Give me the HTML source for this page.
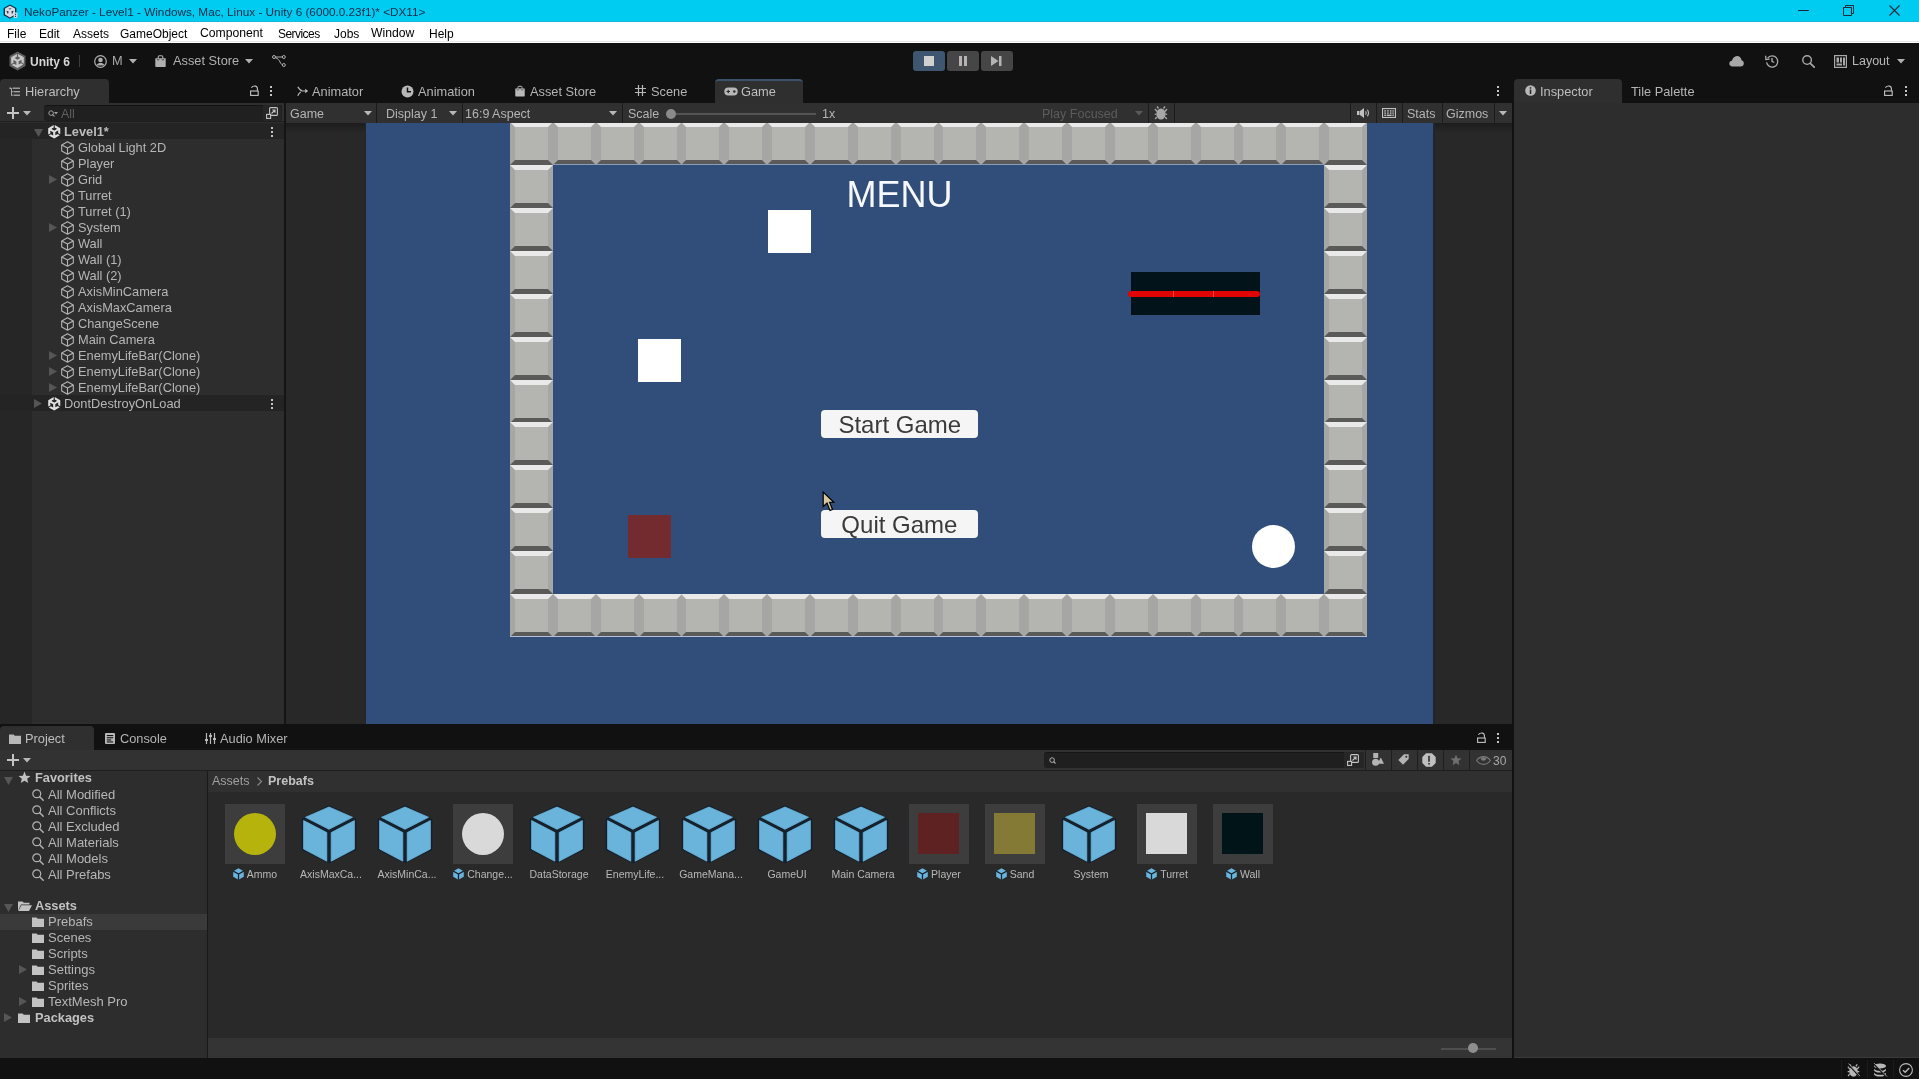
<!DOCTYPE html>
<html><head><meta charset="utf-8"><style>
html,body{margin:0;padding:0;width:1919px;height:1079px;overflow:hidden;background:#111111;}
body{position:relative;font-family:"Liberation Sans", sans-serif;}
div{position:absolute;box-sizing:border-box;}
.t{white-space:nowrap;}
.tile{width:43px;height:43px;border-style:solid;border-width:5px;border-color:#e8e9e8 #a6a6a4 #5a5a58 #a6a6a4;background:#b4b4b1;}
</style></head><body>
<div id="root" style="left:0;top:0;width:1919px;height:1079px;will-change:transform;">
<div style="left:0px;top:0px;width:1919px;height:22px;background:#00ccf2;"></div>
<div class="t" style="left:24px;top:5.85px;font-size:11.75px;line-height:11.75px;color:#0a2a48;font-weight:400;font-family:'Liberation Sans', sans-serif;">NekoPanzer - Level1 - Windows, Mac, Linux - Unity 6 (6000.0.23f1)* &lt;DX11&gt;</div>
<div style="left:0px;top:22px;width:1919px;height:21px;background:#ffffff;"></div>
<div style="left:0px;top:21px;width:1919px;height:1px;background:#18b6d8;"></div>
<div style="left:0px;top:41px;width:1919px;height:1px;background:#e6e6e6;"></div>
<div class="t" style="left:7px;top:27.64px;font-size:12px;line-height:12px;color:#000000;font-weight:400;font-family:'Liberation Sans', sans-serif;letter-spacing:0px;">File</div>
<div class="t" style="left:39px;top:27.64px;font-size:12px;line-height:12px;color:#000000;font-weight:400;font-family:'Liberation Sans', sans-serif;letter-spacing:0px;">Edit</div>
<div class="t" style="left:73px;top:27.64px;font-size:12px;line-height:12px;color:#000000;font-weight:400;font-family:'Liberation Sans', sans-serif;letter-spacing:0px;">Assets</div>
<div class="t" style="left:120px;top:27.64px;font-size:12px;line-height:12px;color:#000000;font-weight:400;font-family:'Liberation Sans', sans-serif;letter-spacing:0px;">GameObject</div>
<div class="t" style="left:200px;top:27.47px;font-size:12.2px;line-height:12.2px;color:#000000;font-weight:400;font-family:'Liberation Sans', sans-serif;letter-spacing:0px;">Component</div>
<div class="t" style="left:278px;top:27.64px;font-size:12px;line-height:12px;color:#000000;font-weight:400;font-family:'Liberation Sans', sans-serif;letter-spacing:-0.55px;">Services</div>
<div class="t" style="left:334px;top:27.64px;font-size:12px;line-height:12px;color:#000000;font-weight:400;font-family:'Liberation Sans', sans-serif;letter-spacing:0px;">Jobs</div>
<div class="t" style="left:371px;top:27.47px;font-size:12.2px;line-height:12.2px;color:#000000;font-weight:400;font-family:'Liberation Sans', sans-serif;letter-spacing:0px;">Window</div>
<div class="t" style="left:429px;top:27.64px;font-size:12px;line-height:12px;color:#000000;font-weight:400;font-family:'Liberation Sans', sans-serif;letter-spacing:0px;">Help</div>
<div style="left:0px;top:43px;width:1919px;height:60px;background:#111111;"></div>
<div class="t" style="left:30px;top:55.64px;font-size:12px;line-height:12px;color:#d6d6d6;font-weight:700;font-family:'Liberation Sans', sans-serif;">Unity 6</div>
<div class="t" style="left:112px;top:54.96px;font-size:12.8px;line-height:12.8px;color:#a8a8a8;font-weight:400;font-family:'Liberation Sans', sans-serif;">M</div>
<div class="t" style="left:173px;top:54.96px;font-size:12.8px;line-height:12.8px;color:#b0b0b0;font-weight:400;font-family:'Liberation Sans', sans-serif;">Asset Store</div>
<div class="t" style="left:1852px;top:55.22px;font-size:12.5px;line-height:12.5px;color:#b8b8b8;font-weight:400;font-family:'Liberation Sans', sans-serif;">Layout</div>
<div style="left:913px;top:51px;width:32px;height:20px;background:#3e5670;border-radius:3px;"></div>
<div style="left:947px;top:51px;width:32px;height:20px;background:#464646;border-radius:3px;"></div>
<div style="left:981px;top:51px;width:32px;height:20px;background:#464646;border-radius:3px;"></div>
<div style="left:0px;top:79px;width:109px;height:24px;background:#2f2f2f;border-radius:4px 4px 0 0;"></div>
<div class="t" style="left:25px;top:85.96px;font-size:12.8px;line-height:12.8px;color:#bebebe;font-weight:400;font-family:'Liberation Sans', sans-serif;">Hierarchy</div>
<div class="t" style="left:312px;top:85.96px;font-size:12.8px;line-height:12.8px;color:#b4b4b4;font-weight:400;font-family:'Liberation Sans', sans-serif;">Animator</div>
<div class="t" style="left:418px;top:85.96px;font-size:12.8px;line-height:12.8px;color:#b4b4b4;font-weight:400;font-family:'Liberation Sans', sans-serif;">Animation</div>
<div class="t" style="left:530px;top:85.96px;font-size:12.8px;line-height:12.8px;color:#b4b4b4;font-weight:400;font-family:'Liberation Sans', sans-serif;">Asset Store</div>
<div class="t" style="left:651px;top:85.96px;font-size:12.8px;line-height:12.8px;color:#b4b4b4;font-weight:400;font-family:'Liberation Sans', sans-serif;">Scene</div>
<div style="left:715px;top:79px;width:88px;height:24px;background:#2f2f2f;border-radius:4px 4px 0 0;border-top:2px solid #3b526b;"></div>
<div class="t" style="left:741px;top:85.96px;font-size:12.8px;line-height:12.8px;color:#bebebe;font-weight:400;font-family:'Liberation Sans', sans-serif;">Game</div>
<div style="left:1514px;top:79px;width:108px;height:24px;background:#2f2f2f;border-radius:4px 4px 0 0;"></div>
<div class="t" style="left:1540px;top:85.96px;font-size:12.8px;line-height:12.8px;color:#bebebe;font-weight:400;font-family:'Liberation Sans', sans-serif;">Inspector</div>
<div class="t" style="left:1631px;top:85.96px;font-size:12.8px;line-height:12.8px;color:#b4b4b4;font-weight:400;font-family:'Liberation Sans', sans-serif;">Tile Palette</div>
<div style="left:0px;top:103px;width:284px;height:621px;background:#2d2d2d;"></div>
<div style="left:0px;top:103px;width:284px;height:19px;background:#2f2f2f;"></div>
<div style="left:0px;top:121px;width:284px;height:1px;background:#1e1e1e;"></div>
<div style="left:44px;top:105px;width:238px;height:16px;background:#202020;border-radius:3px;border-top:1px solid #131313;"></div>
<div class="t" style="left:61px;top:107.72px;font-size:12.5px;line-height:12.5px;color:#5e5e5e;font-weight:400;font-family:'Liberation Sans', sans-serif;">All</div>
<div style="left:0px;top:139px;width:32px;height:585px;background:#262626;"></div>
<div style="left:0px;top:123px;width:284px;height:16px;background:#242424;"></div>
<div style="left:0px;top:395px;width:284px;height:16px;background:#242424;"></div>
<div class="t" style="left:64px;top:126.06px;font-size:12.8px;line-height:12.8px;color:#bcbcbc;font-weight:700;font-family:'Liberation Sans', sans-serif;">Level1*</div>
<div class="t" style="left:78px;top:141.76px;font-size:12.8px;line-height:12.8px;color:#b6b6b6;font-weight:400;font-family:'Liberation Sans', sans-serif;">Global Light 2D</div>
<div class="t" style="left:78px;top:157.76px;font-size:12.8px;line-height:12.8px;color:#b6b6b6;font-weight:400;font-family:'Liberation Sans', sans-serif;">Player</div>
<div class="t" style="left:78px;top:173.76px;font-size:12.8px;line-height:12.8px;color:#b6b6b6;font-weight:400;font-family:'Liberation Sans', sans-serif;">Grid</div>
<div class="t" style="left:78px;top:189.76px;font-size:12.8px;line-height:12.8px;color:#b6b6b6;font-weight:400;font-family:'Liberation Sans', sans-serif;">Turret</div>
<div class="t" style="left:78px;top:205.76px;font-size:12.8px;line-height:12.8px;color:#b6b6b6;font-weight:400;font-family:'Liberation Sans', sans-serif;">Turret (1)</div>
<div class="t" style="left:78px;top:221.76px;font-size:12.8px;line-height:12.8px;color:#b6b6b6;font-weight:400;font-family:'Liberation Sans', sans-serif;">System</div>
<div class="t" style="left:78px;top:237.76px;font-size:12.8px;line-height:12.8px;color:#b6b6b6;font-weight:400;font-family:'Liberation Sans', sans-serif;">Wall</div>
<div class="t" style="left:78px;top:253.76px;font-size:12.8px;line-height:12.8px;color:#b6b6b6;font-weight:400;font-family:'Liberation Sans', sans-serif;">Wall (1)</div>
<div class="t" style="left:78px;top:269.76px;font-size:12.8px;line-height:12.8px;color:#b6b6b6;font-weight:400;font-family:'Liberation Sans', sans-serif;">Wall (2)</div>
<div class="t" style="left:78px;top:285.76px;font-size:12.8px;line-height:12.8px;color:#b6b6b6;font-weight:400;font-family:'Liberation Sans', sans-serif;">AxisMinCamera</div>
<div class="t" style="left:78px;top:301.76px;font-size:12.8px;line-height:12.8px;color:#b6b6b6;font-weight:400;font-family:'Liberation Sans', sans-serif;">AxisMaxCamera</div>
<div class="t" style="left:78px;top:317.76px;font-size:12.8px;line-height:12.8px;color:#b6b6b6;font-weight:400;font-family:'Liberation Sans', sans-serif;">ChangeScene</div>
<div class="t" style="left:78px;top:333.76px;font-size:12.8px;line-height:12.8px;color:#b6b6b6;font-weight:400;font-family:'Liberation Sans', sans-serif;">Main Camera</div>
<div class="t" style="left:78px;top:349.76px;font-size:12.8px;line-height:12.8px;color:#b6b6b6;font-weight:400;font-family:'Liberation Sans', sans-serif;">EnemyLifeBar(Clone)</div>
<div class="t" style="left:78px;top:365.76px;font-size:12.8px;line-height:12.8px;color:#b6b6b6;font-weight:400;font-family:'Liberation Sans', sans-serif;">EnemyLifeBar(Clone)</div>
<div class="t" style="left:78px;top:381.76px;font-size:12.8px;line-height:12.8px;color:#b6b6b6;font-weight:400;font-family:'Liberation Sans', sans-serif;">EnemyLifeBar(Clone)</div>
<div class="t" style="left:64px;top:397.76px;font-size:12.8px;line-height:12.8px;color:#b6b6b6;font-weight:400;font-family:'Liberation Sans', sans-serif;">DontDestroyOnLoad</div>
<div style="left:284px;top:103px;width:2px;height:621px;background:#151515;"></div>
<div style="left:1512px;top:79px;width:2px;height:1000px;background:#111111;"></div>
<div style="left:286px;top:103px;width:1226px;height:621px;background:#282828;"></div>
<div style="left:286px;top:123px;width:1226px;height:10px;background:linear-gradient(#1c1c1c,#282828);"></div>
<div style="left:1433px;top:123px;width:2px;height:601px;background:#20242e;"></div>
<div style="left:365px;top:123px;width:1px;height:601px;background:#22242e;"></div>
<div style="left:286px;top:103px;width:1226px;height:20px;background:#303030;"></div>
<div class="t" style="left:290px;top:107.72px;font-size:12.5px;line-height:12.5px;color:#b4b4b4;font-weight:400;font-family:'Liberation Sans', sans-serif;">Game</div>
<div class="t" style="left:386px;top:107.72px;font-size:12.5px;line-height:12.5px;color:#b4b4b4;font-weight:400;font-family:'Liberation Sans', sans-serif;">Display 1</div>
<div class="t" style="left:465px;top:107.72px;font-size:12.5px;line-height:12.5px;color:#b4b4b4;font-weight:400;font-family:'Liberation Sans', sans-serif;">16:9 Aspect</div>
<div class="t" style="left:628px;top:107.72px;font-size:12.5px;line-height:12.5px;color:#b4b4b4;font-weight:400;font-family:'Liberation Sans', sans-serif;">Scale</div>
<div class="t" style="left:822px;top:107.72px;font-size:12.5px;line-height:12.5px;color:#b4b4b4;font-weight:400;font-family:'Liberation Sans', sans-serif;">1x</div>
<div class="t" style="left:1042px;top:107.72px;font-size:12.5px;line-height:12.5px;color:#5c5c5c;font-weight:400;font-family:'Liberation Sans', sans-serif;">Play Focused</div>
<div class="t" style="left:1407px;top:107.72px;font-size:12.5px;line-height:12.5px;color:#b4b4b4;font-weight:400;font-family:'Liberation Sans', sans-serif;">Stats</div>
<div class="t" style="left:1446px;top:107.72px;font-size:12.5px;line-height:12.5px;color:#b4b4b4;font-weight:400;font-family:'Liberation Sans', sans-serif;">Gizmos</div>
<div style="left:366px;top:123px;width:1067px;height:601px;background:#314d79;"></div>
<div style="left:1514px;top:103px;width:405px;height:955px;background:#2d2d2d;"></div>
<div style="left:0px;top:724px;width:1512px;height:26px;background:#111111;"></div>
<div style="left:0px;top:726px;width:94px;height:24px;background:#2f2f2f;border-radius:4px 4px 0 0;"></div>
<div class="t" style="left:25px;top:732.96px;font-size:12.8px;line-height:12.8px;color:#bebebe;font-weight:400;font-family:'Liberation Sans', sans-serif;">Project</div>
<div class="t" style="left:120px;top:732.96px;font-size:12.8px;line-height:12.8px;color:#b4b4b4;font-weight:400;font-family:'Liberation Sans', sans-serif;">Console</div>
<div class="t" style="left:220px;top:732.96px;font-size:12.8px;line-height:12.8px;color:#b4b4b4;font-weight:400;font-family:'Liberation Sans', sans-serif;">Audio Mixer</div>
<div style="left:0px;top:750px;width:1512px;height:20px;background:#323232;"></div>
<div style="left:0px;top:770px;width:1512px;height:1px;background:#1e1e1e;"></div>
<div style="left:0px;top:771px;width:207px;height:287px;background:#2d2d2d;"></div>
<div style="left:207px;top:771px;width:1px;height:287px;background:#1a1a1a;"></div>
<div style="left:208px;top:771px;width:1304px;height:287px;background:#292929;"></div>
<div style="left:208px;top:771px;width:1304px;height:21px;background:#303030;"></div>
<div style="left:208px;top:1038px;width:1304px;height:20px;background:#343434;"></div>
<div class="t" style="left:35px;top:772.46px;font-size:12.8px;line-height:12.8px;color:#c2c2c2;font-weight:700;font-family:'Liberation Sans', sans-serif;">Favorites</div>
<div class="t" style="left:48px;top:788.00px;font-size:13px;line-height:13px;color:#b6b6b6;font-weight:400;font-family:'Liberation Sans', sans-serif;">All Modified</div>
<div class="t" style="left:48px;top:804.00px;font-size:13px;line-height:13px;color:#b6b6b6;font-weight:400;font-family:'Liberation Sans', sans-serif;">All Conflicts</div>
<div class="t" style="left:48px;top:820.00px;font-size:13px;line-height:13px;color:#b6b6b6;font-weight:400;font-family:'Liberation Sans', sans-serif;">All Excluded</div>
<div class="t" style="left:48px;top:836.00px;font-size:13px;line-height:13px;color:#b6b6b6;font-weight:400;font-family:'Liberation Sans', sans-serif;">All Materials</div>
<div class="t" style="left:48px;top:852.00px;font-size:13px;line-height:13px;color:#b6b6b6;font-weight:400;font-family:'Liberation Sans', sans-serif;">All Models</div>
<div class="t" style="left:48px;top:868.00px;font-size:13px;line-height:13px;color:#b6b6b6;font-weight:400;font-family:'Liberation Sans', sans-serif;">All Prefabs</div>
<div style="left:0px;top:914px;width:207px;height:16px;background:#3a3a3a;"></div>
<div class="t" style="left:35px;top:899.76px;font-size:12.8px;line-height:12.8px;color:#c2c2c2;font-weight:700;font-family:'Liberation Sans', sans-serif;">Assets</div>
<div class="t" style="left:48px;top:914.70px;font-size:13px;line-height:13px;color:#b6b6b6;font-weight:400;font-family:'Liberation Sans', sans-serif;">Prebafs</div>
<div class="t" style="left:48px;top:930.70px;font-size:13px;line-height:13px;color:#b6b6b6;font-weight:400;font-family:'Liberation Sans', sans-serif;">Scenes</div>
<div class="t" style="left:48px;top:946.70px;font-size:13px;line-height:13px;color:#b6b6b6;font-weight:400;font-family:'Liberation Sans', sans-serif;">Scripts</div>
<div class="t" style="left:48px;top:962.70px;font-size:13px;line-height:13px;color:#b6b6b6;font-weight:400;font-family:'Liberation Sans', sans-serif;">Settings</div>
<div class="t" style="left:48px;top:978.70px;font-size:13px;line-height:13px;color:#b6b6b6;font-weight:400;font-family:'Liberation Sans', sans-serif;">Sprites</div>
<div class="t" style="left:48px;top:994.70px;font-size:13px;line-height:13px;color:#b6b6b6;font-weight:400;font-family:'Liberation Sans', sans-serif;">TextMesh Pro</div>
<div class="t" style="left:35px;top:1011.76px;font-size:12.8px;line-height:12.8px;color:#c2c2c2;font-weight:700;font-family:'Liberation Sans', sans-serif;">Packages</div>
<div class="t" style="left:212px;top:775.22px;font-size:12.5px;line-height:12.5px;color:#a0a0a0;font-weight:400;font-family:'Liberation Sans', sans-serif;">Assets</div>
<div class="t" style="left:268px;top:775.22px;font-size:12.5px;line-height:12.5px;color:#c2c2c2;font-weight:700;font-family:'Liberation Sans', sans-serif;">Prebafs</div>
<div style="left:0px;top:1058px;width:1919px;height:21px;background:#111111;"></div>
<div style="left:366px;top:123px;width:1067px;height:601px;overflow:hidden;background:#314d79;">
<div class="tile" style="left:144px;top:-1px;"></div>
<div class="tile" style="left:144px;top:471px;"></div>
<div class="tile" style="left:187px;top:-1px;"></div>
<div class="tile" style="left:187px;top:471px;"></div>
<div class="tile" style="left:230px;top:-1px;"></div>
<div class="tile" style="left:230px;top:471px;"></div>
<div class="tile" style="left:273px;top:-1px;"></div>
<div class="tile" style="left:273px;top:471px;"></div>
<div class="tile" style="left:315px;top:-1px;"></div>
<div class="tile" style="left:315px;top:471px;"></div>
<div class="tile" style="left:358px;top:-1px;"></div>
<div class="tile" style="left:358px;top:471px;"></div>
<div class="tile" style="left:401px;top:-1px;"></div>
<div class="tile" style="left:401px;top:471px;"></div>
<div class="tile" style="left:444px;top:-1px;"></div>
<div class="tile" style="left:444px;top:471px;"></div>
<div class="tile" style="left:487px;top:-1px;"></div>
<div class="tile" style="left:487px;top:471px;"></div>
<div class="tile" style="left:530px;top:-1px;"></div>
<div class="tile" style="left:530px;top:471px;"></div>
<div class="tile" style="left:572px;top:-1px;"></div>
<div class="tile" style="left:572px;top:471px;"></div>
<div class="tile" style="left:615px;top:-1px;"></div>
<div class="tile" style="left:615px;top:471px;"></div>
<div class="tile" style="left:658px;top:-1px;"></div>
<div class="tile" style="left:658px;top:471px;"></div>
<div class="tile" style="left:701px;top:-1px;"></div>
<div class="tile" style="left:701px;top:471px;"></div>
<div class="tile" style="left:744px;top:-1px;"></div>
<div class="tile" style="left:744px;top:471px;"></div>
<div class="tile" style="left:787px;top:-1px;"></div>
<div class="tile" style="left:787px;top:471px;"></div>
<div class="tile" style="left:830px;top:-1px;"></div>
<div class="tile" style="left:830px;top:471px;"></div>
<div class="tile" style="left:872px;top:-1px;"></div>
<div class="tile" style="left:872px;top:471px;"></div>
<div class="tile" style="left:915px;top:-1px;"></div>
<div class="tile" style="left:915px;top:471px;"></div>
<div class="tile" style="left:958px;top:-1px;"></div>
<div class="tile" style="left:958px;top:471px;"></div>
<div class="tile" style="left:144px;top:42px;"></div>
<div class="tile" style="left:958px;top:42px;"></div>
<div class="tile" style="left:144px;top:85px;"></div>
<div class="tile" style="left:958px;top:85px;"></div>
<div class="tile" style="left:144px;top:128px;"></div>
<div class="tile" style="left:958px;top:128px;"></div>
<div class="tile" style="left:144px;top:171px;"></div>
<div class="tile" style="left:958px;top:171px;"></div>
<div class="tile" style="left:144px;top:214px;"></div>
<div class="tile" style="left:958px;top:214px;"></div>
<div class="tile" style="left:144px;top:257px;"></div>
<div class="tile" style="left:958px;top:257px;"></div>
<div class="tile" style="left:144px;top:299px;"></div>
<div class="tile" style="left:958px;top:299px;"></div>
<div class="tile" style="left:144px;top:342px;"></div>
<div class="tile" style="left:958px;top:342px;"></div>
<div class="tile" style="left:144px;top:385px;"></div>
<div class="tile" style="left:958px;top:385px;"></div>
<div class="tile" style="left:144px;top:428px;"></div>
<div class="tile" style="left:958px;top:428px;"></div>
<div style="left:144px;top:513px;width:857px;height:1px;background:#b4c0d4;"></div>
<div style="left:187px;top:41px;width:771px;height:1px;background:#8c9cb8;"></div>
<div style="left:402px;top:87px;width:43px;height:43px;background:#ffffff;"></div>
<div style="left:272px;top:216px;width:43px;height:43px;background:#ffffff;"></div>
<div style="left:262px;top:392px;width:43px;height:43px;background:#732b2f;"></div>
<div style="left:886px;top:402px;width:43px;height:43px;background:#ffffff;border-radius:50%;"></div>
<div style="left:765px;top:149px;width:129px;height:43px;background:#02141a;"></div>
<div style="left:762px;top:168px;width:132px;height:6px;background:#e00404;border-radius:3px;"></div>
<div style="left:807px;top:168px;width:1px;height:6px;background:#f04848;"></div>
<div style="left:847px;top:168px;width:1px;height:6px;background:#f04848;"></div>
<div style="left:455px;top:287px;width:157px;height:28px;background:#f5f5f5;border-radius:4px;"></div>
<div style="left:455px;top:387px;width:157px;height:28px;background:#f5f5f5;border-radius:4px;"></div>
<div class="t" style="left:383.5px;width:300px;text-align:center;top:53.83px;font-size:36px;line-height:36px;color:#f6f9ff;">MENU</div>
<div class="t" style="left:383.79999999999995px;width:300px;text-align:center;top:290.48px;font-size:24px;line-height:24px;color:#3a3a3a;">Start Game</div>
<div class="t" style="left:383.4px;width:300px;text-align:center;top:389.98px;font-size:24px;line-height:24px;color:#3a3a3a;">Quit Game</div>
</div>
<svg style="position:absolute;left:821px;top:490px;" width="16" height="22" viewBox="0 0 16 22"><path d="M2.2 2.1 L2.2 16.7 L6 13 L9 20.5 L11.5 19.5 L8.6 12.4 L12.8 12.2 Z" fill="#d8c8a0" stroke="#000" stroke-width="1.2" stroke-linejoin="miter"/></svg>
<svg style="position:absolute;left:3px;top:4px;overflow:visible" width="15" height="15" viewBox="0 0 15 15"><path d="M7 0.4L13.4 4V11.2L7 14.8L0.6 11.2V4Z" fill="#0e3048"/><path d="M7 1.8L12 4.6V10.6L7 13.4L2 10.6V4.6Z" fill="#d6dce4"/><path d="M5.2 4.6H8.8L7 5.6Z M3.3 6.8L5 10.3L5.6 7.6Z M10.7 6.8L9 10.3L8.4 7.6Z" fill="#1a2a3a"/><rect x="10.6" y="8.6" width="3.8" height="5.4" rx="1" fill="#d6dce4"/><rect x="11.9" y="9.8" width="1.2" height="1.1" fill="#1a2a3a"/><rect x="11.9" y="11.8" width="1.2" height="1.1" fill="#1a2a3a"/></svg>
<div style="left:1798px;top:10px;width:11px;height:1px;background:#1a2a3a;"></div>
<svg style="position:absolute;left:1843px;top:5px;overflow:visible" width="11" height="11" viewBox="0 0 11 11"><path d="M0.5 2.5H8.5V10.5H0.5Z M2.5 2.5V0.5H10.5V8.5H8.5" fill="none" stroke="#1a2a3a" stroke-width="1"/></svg>
<svg style="position:absolute;left:1889px;top:5px;overflow:visible" width="11" height="11" viewBox="0 0 11 11"><path d="M0.5 0.5L10.5 10.5M10.5 0.5L0.5 10.5" stroke="#1a2a3a" stroke-width="1.1"/></svg>
<svg style="position:absolute;left:9px;top:51px;overflow:visible" width="17" height="20" viewBox="0 0 17 20"><path d="M8.5 0.5L16.5 5V15L8.5 19.5L0.5 15V5Z" fill="#5f5f5f"/></svg>
<svg style="position:absolute;left:11px;top:54px;overflow:visible" width="13" height="14" viewBox="1 0 22 23.5"><path d="M12.9288 4.2939l3.7997 2.1929c.1366.077.1415.2905 0 .3675l-4.515 2.6076a.4192.4192 0 0 1-.4246 0L7.274 6.8543c-.139-.0745-.1415-.293 0-.3675l3.7972-2.193V0L1.3758 5.5977V16.793l3.7177-2.1456v-4.3858c-.0025-.1565.1813-.2682.3128-.1813l4.5151 2.6076a.4177.4177 0 0 1 .2135.3666v5.2134c.0025.1565-.1813.2682-.3128.1813l-3.7972-2.1929-3.7177 2.1457L12 23.4124l9.6942-5.5977-3.7177-2.1457-3.7972 2.1929c-.1316.0869-.3128-.0248-.3128-.1813v-5.2134a.4177.4177 0 0 1 .2135-.3666l4.5151-2.6076c.1315-.0869.3153.0248.3128.1813v4.3858l3.7177 2.1456V5.5977L12.9288 0v4.2939z" fill="#c8c8c8"/></svg>
<div style="left:79px;top:55px;width:1px;height:12px;background:#3c3c3c;"></div>
<svg style="position:absolute;left:94px;top:55px;overflow:visible" width="13" height="13" viewBox="0 0 13 13"><circle cx="6.5" cy="6.5" r="5.8" fill="none" stroke="#b0b0b0" stroke-width="1.2"/><circle cx="6.5" cy="5" r="2.3" fill="#b0b0b0"/><path d="M2.3 10.5C3.3 8.5 4.8 8 6.5 8S9.7 8.5 10.7 10.5" fill="#b0b0b0"/></svg>
<svg style="position:absolute;left:129px;top:59px;overflow:visible" width="8" height="4.5" viewBox="0 0 8 4.5"><path d="M0 0H8L4.0 4.5Z" fill="#b0b0b0"/></svg>
<svg style="position:absolute;left:155px;top:55px;overflow:visible" width="11" height="12" viewBox="0 0 11 12"><path d="M3.2 4.2V2A1.2 1.2 0 0 1 4.4 0.8H6.6A1.2 1.2 0 0 1 7.8 2V4.2" fill="none" stroke="#b0b0b0" stroke-width="1.1"/><path d="M0.3 3.3H10.7V11.3Q10.7 12 10 12H1Q0.3 12 0.3 11.3Z" fill="#b0b0b0"/><path d="M2.3 4.2L3.2 5.3L4.1 4.2M6.9 4.2L7.8 5.3L8.7 4.2" fill="none" stroke="#111" stroke-width="0.7"/></svg>
<svg style="position:absolute;left:245px;top:59px;overflow:visible" width="8" height="4.5" viewBox="0 0 8 4.5"><path d="M0 0H8L4.0 4.5Z" fill="#b0b0b0"/></svg>
<svg style="position:absolute;left:272px;top:55px;overflow:visible" width="14" height="12" viewBox="0 0 14 12"><circle cx="2" cy="2" r="1.5" fill="none" stroke="#b0b0b0" stroke-width="1"/><circle cx="11.8" cy="2" r="1.5" fill="none" stroke="#b0b0b0" stroke-width="1"/><circle cx="11.8" cy="10" r="1.5" fill="none" stroke="#b0b0b0" stroke-width="1"/><path d="M3.5 2H10.3M3.3 2.8C6 3.5 7 5 8 7C8.8 8.6 9.6 9.5 10.3 9.8" fill="none" stroke="#b0b0b0" stroke-width="1"/></svg>
<div style="left:924px;top:56px;width:10px;height:10px;background:#d0d0d0;"></div>
<div style="left:959px;top:56px;width:3px;height:10px;background:#b4b4b4;"></div>
<div style="left:964px;top:56px;width:3px;height:10px;background:#b4b4b4;"></div>
<svg style="position:absolute;left:991px;top:56px;overflow:visible" width="11" height="10" viewBox="0 0 11 10"><path d="M0 0L7.5 5L0 10Z" fill="#b4b4b4"/><rect x="8" y="0" width="2.5" height="10" fill="#b4b4b4"/></svg>
<svg style="position:absolute;left:1729px;top:55px;overflow:visible" width="15" height="12" viewBox="0 0 15 12"><path d="M3.5 11.5C1.6 11.5 0.3 10.3 0.3 8.6C0.3 7 1.5 5.9 3 5.8C3.4 3.2 5.4 1 8 1C10.5 1 12.3 2.9 12.5 5.3C14 5.6 14.8 6.9 14.8 8.4C14.8 10.2 13.5 11.5 11.7 11.5Z" fill="#a8a8a8"/></svg>
<svg style="position:absolute;left:1765px;top:54px;overflow:visible" width="14" height="14" viewBox="0 0 14 14"><path d="M2.6 4.2A5.6 5.6 0 1 1 1.6 8.3" fill="none" stroke="#a8a8a8" stroke-width="1.3"/><path d="M0.6 1.8L0.9 5.6L4.6 5" fill="none" stroke="#a8a8a8" stroke-width="1.3"/><path d="M7 4V7.3L9.2 8.5" fill="none" stroke="#a8a8a8" stroke-width="1.4"/></svg>
<svg style="position:absolute;left:1802px;top:55px;overflow:visible" width="13" height="13" viewBox="0 0 13 13"><circle cx="5.09" cy="5.09" r="4.29" fill="none" stroke="#a8a8a8" stroke-width="1.4"/><path d="M8.307500000000001 8.307500000000001L12.2 12.2" stroke="#a8a8a8" stroke-width="1.68" stroke-linecap="round"/></svg>
<svg style="position:absolute;left:1834px;top:55px;overflow:visible" width="13" height="13" viewBox="0 0 13 13"><rect x="0.6" y="0.6" width="11.8" height="11.8" fill="none" stroke="#a8a8a8" stroke-width="1.2"/><rect x="2.5" y="2.5" width="2.5" height="5" fill="#a8a8a8"/><rect x="6" y="2.5" width="2" height="5" fill="#a8a8a8"/><rect x="9" y="2.5" width="2" height="8" fill="#a8a8a8"/><rect x="2.5" y="8.5" width="5.5" height="2" fill="#a8a8a8"/></svg>
<svg style="position:absolute;left:1897px;top:59px;overflow:visible" width="8" height="4.5" viewBox="0 0 8 4.5"><path d="M0 0H8L4.0 4.5Z" fill="#b0b0b0"/></svg>
<svg style="position:absolute;left:9px;top:87px;overflow:visible" width="12" height="10" viewBox="0 0 12 10"><g fill="#b4b4b4"><rect x="3.5" y="0.6" width="7.5" height="1.2"/><rect x="4.5" y="4.1" width="6.5" height="1.2"/><rect x="4.5" y="7.6" width="6.5" height="1.2"/><rect x="0.5" y="0.5" width="1.5" height="1.5"/><rect x="2" y="1.2" width="0.9" height="7"/><rect x="2" y="4.2" width="1.8" height="1"/><rect x="2" y="7.7" width="1.8" height="1"/></g></svg>
<svg style="position:absolute;left:250px;top:85px;overflow:visible" width="9" height="11" viewBox="0 0 9 11"><path d="M1.4 2.6Q3.2 0.6 5.6 1.1Q7.4 1.6 7.4 3.6V5.8" fill="none" stroke="#c4c4c4" stroke-width="1.1"/><rect x="0.6" y="6" width="7.6" height="4.4" fill="none" stroke="#c4c4c4" stroke-width="1.1"/></svg>
<div style="left:270px;top:86px;width:2px;height:2px;background:#c4c4c4;"></div>
<div style="left:270px;top:90px;width:2px;height:2px;background:#c4c4c4;"></div>
<div style="left:270px;top:94px;width:2px;height:2px;background:#c4c4c4;"></div>
<svg style="position:absolute;left:297px;top:86px;overflow:visible" width="12" height="11" viewBox="0 0 12 11"><path d="M0.8 0.8C2 2.5 3 4.6 5.5 5H10M0.8 9.8C1.5 8 2.5 6.6 3.8 6" fill="none" stroke="#b8b8b8" stroke-width="1.2"/><path d="M8.2 2.8L11.2 5L8.2 7.2Z" fill="#b8b8b8"/></svg>
<svg style="position:absolute;left:401px;top:85px;overflow:visible" width="13" height="13" viewBox="0 0 13 13"><circle cx="6.5" cy="6.5" r="6" fill="#b8b8b8"/><path d="M6.5 2.5V6.8H10" fill="none" stroke="#111" stroke-width="1.5"/></svg>
<svg style="position:absolute;left:515px;top:85px;overflow:visible" width="10" height="12" viewBox="0 0 11 12"><path d="M3.2 4.2V2A1.2 1.2 0 0 1 4.4 0.8H6.6A1.2 1.2 0 0 1 7.8 2V4.2" fill="none" stroke="#b8b8b8" stroke-width="1.1"/><path d="M0.3 3.3H10.7V11.3Q10.7 12 10 12H1Q0.3 12 0.3 11.3Z" fill="#b8b8b8"/><path d="M2.3 4.2L3.2 5.3L4.1 4.2M6.9 4.2L7.8 5.3L8.7 4.2" fill="none" stroke="#111" stroke-width="0.7"/></svg>
<svg style="position:absolute;left:635px;top:85px;overflow:visible" width="11" height="11" viewBox="0 0 11 11"><path d="M3.5 0V11M7.5 0V11M0 3.5H11M0 7.5H11" stroke="#b8b8b8" stroke-width="1.2"/></svg>
<svg style="position:absolute;left:724px;top:87px;overflow:visible" width="14" height="9" viewBox="0 0 14 9"><rect x="0.3" y="0.5" width="13.4" height="8" rx="4" fill="#b8b8b8"/><path d="M2.5 4.5H6M4.25 2.8V6.2" stroke="#2a2a2a" stroke-width="1.1"/><circle cx="10.3" cy="4.5" r="1.2" fill="#2a2a2a"/></svg>
<div style="left:1497px;top:86px;width:2px;height:2px;background:#c4c4c4;"></div>
<div style="left:1497px;top:90px;width:2px;height:2px;background:#c4c4c4;"></div>
<div style="left:1497px;top:94px;width:2px;height:2px;background:#c4c4c4;"></div>
<svg style="position:absolute;left:1525px;top:85px;overflow:visible" width="11" height="11" viewBox="0 0 11 11"><circle cx="5.5" cy="5.5" r="5.3" fill="#b8b8b8"/><rect x="4.7" y="4.5" width="1.6" height="4.5" fill="#2a2a2a"/><rect x="4.7" y="2.2" width="1.6" height="1.5" fill="#2a2a2a"/></svg>
<svg style="position:absolute;left:1884px;top:85px;overflow:visible" width="9" height="11" viewBox="0 0 9 11"><path d="M1.4 2.6Q3.2 0.6 5.6 1.1Q7.4 1.6 7.4 3.6V5.8" fill="none" stroke="#c4c4c4" stroke-width="1.1"/><rect x="0.6" y="6" width="7.6" height="4.4" fill="none" stroke="#c4c4c4" stroke-width="1.1"/></svg>
<div style="left:1905px;top:86px;width:2px;height:2px;background:#c4c4c4;"></div>
<div style="left:1905px;top:90px;width:2px;height:2px;background:#c4c4c4;"></div>
<div style="left:1905px;top:94px;width:2px;height:2px;background:#c4c4c4;"></div>
<div style="left:7px;top:112px;width:12px;height:2px;background:#c4c4c4;"></div>
<div style="left:12px;top:107px;width:2px;height:12px;background:#c4c4c4;"></div>
<svg style="position:absolute;left:23px;top:111px;overflow:visible" width="8" height="4.5" viewBox="0 0 8 4.5"><path d="M0 0H8L4.0 4.5Z" fill="#b8b8b8"/></svg>
<div style="left:263px;top:105px;width:18px;height:16px;background:#262626;border-radius:0 3px 3px 0;"></div>
<svg style="position:absolute;left:266px;top:107px;overflow:visible" width="12" height="12" viewBox="0 0 12 12"><rect x="3.6" y="0.6" width="7.8" height="7.8" rx="1" fill="none" stroke="#c4c4c4" stroke-width="1.1"/><rect x="0.6" y="7.4" width="4" height="4" fill="#262626" stroke="#c4c4c4" stroke-width="1.1"/><path d="M5.5 6.5L9 3M6.3 3H9V5.7" fill="none" stroke="#c4c4c4" stroke-width="1.1"/></svg>
<svg style="position:absolute;left:48px;top:110px;overflow:visible" width="7" height="7" viewBox="0 0 7 7"><circle cx="3.1100000000000003" cy="3.1100000000000003" r="2.31" fill="none" stroke="#a0a0a0" stroke-width="1.0"/><path d="M4.8425 4.8425L6.2 6.2" stroke="#a0a0a0" stroke-width="1.2" stroke-linecap="round"/></svg>
<svg style="position:absolute;left:54px;top:111.5px;overflow:visible" width="4" height="2.5" viewBox="0 0 4 2.5"><path d="M0 0H4L2.0 2.5Z" fill="#a0a0a0"/></svg>
<svg style="position:absolute;left:34px;top:129px;overflow:visible" width="9" height="8" viewBox="0 0 9 8"><path d="M0 0H9L4.5 8Z" fill="#555555"/></svg>
<svg style="position:absolute;left:48px;top:125px;overflow:visible" width="12.5" height="13.5" viewBox="1 0 22 23.5"><path d="M12.9288 4.2939l3.7997 2.1929c.1366.077.1415.2905 0 .3675l-4.515 2.6076a.4192.4192 0 0 1-.4246 0L7.274 6.8543c-.139-.0745-.1415-.293 0-.3675l3.7972-2.193V0L1.3758 5.5977V16.793l3.7177-2.1456v-4.3858c-.0025-.1565.1813-.2682.3128-.1813l4.5151 2.6076a.4177.4177 0 0 1 .2135.3666v5.2134c.0025.1565-.1813.2682-.3128.1813l-3.7972-2.1929-3.7177 2.1457L12 23.4124l9.6942-5.5977-3.7177-2.1457-3.7972 2.1929c-.1316.0869-.3128-.0248-.3128-.1813v-5.2134a.4177.4177 0 0 1 .2135-.3666l4.5151-2.6076c.1315-.0869.3153.0248.3128.1813v4.3858l3.7177 2.1456V5.5977L12.9288 0v4.2939z" fill="#e0e0e0"/></svg>
<svg style="position:absolute;left:61px;top:141px;overflow:visible" width="13" height="14" viewBox="0 0 13 14"><path d="M6.5 0.7L12.3 3.9V10.1L6.5 13.3L0.7 10.1V3.9Z M0.7 3.9L6.5 7.1L12.3 3.9 M6.5 7.1V13.3" fill="none" stroke="#b4b4b4" stroke-width="1.1" stroke-linejoin="round"/></svg>
<svg style="position:absolute;left:61px;top:157px;overflow:visible" width="13" height="14" viewBox="0 0 13 14"><path d="M6.5 0.7L12.3 3.9V10.1L6.5 13.3L0.7 10.1V3.9Z M0.7 3.9L6.5 7.1L12.3 3.9 M6.5 7.1V13.3" fill="none" stroke="#b4b4b4" stroke-width="1.1" stroke-linejoin="round"/></svg>
<svg style="position:absolute;left:61px;top:173px;overflow:visible" width="13" height="14" viewBox="0 0 13 14"><path d="M6.5 0.7L12.3 3.9V10.1L6.5 13.3L0.7 10.1V3.9Z M0.7 3.9L6.5 7.1L12.3 3.9 M6.5 7.1V13.3" fill="none" stroke="#b4b4b4" stroke-width="1.1" stroke-linejoin="round"/></svg>
<svg style="position:absolute;left:61px;top:189px;overflow:visible" width="13" height="14" viewBox="0 0 13 14"><path d="M6.5 0.7L12.3 3.9V10.1L6.5 13.3L0.7 10.1V3.9Z M0.7 3.9L6.5 7.1L12.3 3.9 M6.5 7.1V13.3" fill="none" stroke="#b4b4b4" stroke-width="1.1" stroke-linejoin="round"/></svg>
<svg style="position:absolute;left:61px;top:205px;overflow:visible" width="13" height="14" viewBox="0 0 13 14"><path d="M6.5 0.7L12.3 3.9V10.1L6.5 13.3L0.7 10.1V3.9Z M0.7 3.9L6.5 7.1L12.3 3.9 M6.5 7.1V13.3" fill="none" stroke="#b4b4b4" stroke-width="1.1" stroke-linejoin="round"/></svg>
<svg style="position:absolute;left:61px;top:221px;overflow:visible" width="13" height="14" viewBox="0 0 13 14"><path d="M6.5 0.7L12.3 3.9V10.1L6.5 13.3L0.7 10.1V3.9Z M0.7 3.9L6.5 7.1L12.3 3.9 M6.5 7.1V13.3" fill="none" stroke="#b4b4b4" stroke-width="1.1" stroke-linejoin="round"/></svg>
<svg style="position:absolute;left:61px;top:237px;overflow:visible" width="13" height="14" viewBox="0 0 13 14"><path d="M6.5 0.7L12.3 3.9V10.1L6.5 13.3L0.7 10.1V3.9Z M0.7 3.9L6.5 7.1L12.3 3.9 M6.5 7.1V13.3" fill="none" stroke="#b4b4b4" stroke-width="1.1" stroke-linejoin="round"/></svg>
<svg style="position:absolute;left:61px;top:253px;overflow:visible" width="13" height="14" viewBox="0 0 13 14"><path d="M6.5 0.7L12.3 3.9V10.1L6.5 13.3L0.7 10.1V3.9Z M0.7 3.9L6.5 7.1L12.3 3.9 M6.5 7.1V13.3" fill="none" stroke="#b4b4b4" stroke-width="1.1" stroke-linejoin="round"/></svg>
<svg style="position:absolute;left:61px;top:269px;overflow:visible" width="13" height="14" viewBox="0 0 13 14"><path d="M6.5 0.7L12.3 3.9V10.1L6.5 13.3L0.7 10.1V3.9Z M0.7 3.9L6.5 7.1L12.3 3.9 M6.5 7.1V13.3" fill="none" stroke="#b4b4b4" stroke-width="1.1" stroke-linejoin="round"/></svg>
<svg style="position:absolute;left:61px;top:285px;overflow:visible" width="13" height="14" viewBox="0 0 13 14"><path d="M6.5 0.7L12.3 3.9V10.1L6.5 13.3L0.7 10.1V3.9Z M0.7 3.9L6.5 7.1L12.3 3.9 M6.5 7.1V13.3" fill="none" stroke="#b4b4b4" stroke-width="1.1" stroke-linejoin="round"/></svg>
<svg style="position:absolute;left:61px;top:301px;overflow:visible" width="13" height="14" viewBox="0 0 13 14"><path d="M6.5 0.7L12.3 3.9V10.1L6.5 13.3L0.7 10.1V3.9Z M0.7 3.9L6.5 7.1L12.3 3.9 M6.5 7.1V13.3" fill="none" stroke="#b4b4b4" stroke-width="1.1" stroke-linejoin="round"/></svg>
<svg style="position:absolute;left:61px;top:317px;overflow:visible" width="13" height="14" viewBox="0 0 13 14"><path d="M6.5 0.7L12.3 3.9V10.1L6.5 13.3L0.7 10.1V3.9Z M0.7 3.9L6.5 7.1L12.3 3.9 M6.5 7.1V13.3" fill="none" stroke="#b4b4b4" stroke-width="1.1" stroke-linejoin="round"/></svg>
<svg style="position:absolute;left:61px;top:333px;overflow:visible" width="13" height="14" viewBox="0 0 13 14"><path d="M6.5 0.7L12.3 3.9V10.1L6.5 13.3L0.7 10.1V3.9Z M0.7 3.9L6.5 7.1L12.3 3.9 M6.5 7.1V13.3" fill="none" stroke="#b4b4b4" stroke-width="1.1" stroke-linejoin="round"/></svg>
<svg style="position:absolute;left:61px;top:349px;overflow:visible" width="13" height="14" viewBox="0 0 13 14"><path d="M6.5 0.7L12.3 3.9V10.1L6.5 13.3L0.7 10.1V3.9Z M0.7 3.9L6.5 7.1L12.3 3.9 M6.5 7.1V13.3" fill="none" stroke="#b4b4b4" stroke-width="1.1" stroke-linejoin="round"/></svg>
<svg style="position:absolute;left:61px;top:365px;overflow:visible" width="13" height="14" viewBox="0 0 13 14"><path d="M6.5 0.7L12.3 3.9V10.1L6.5 13.3L0.7 10.1V3.9Z M0.7 3.9L6.5 7.1L12.3 3.9 M6.5 7.1V13.3" fill="none" stroke="#b4b4b4" stroke-width="1.1" stroke-linejoin="round"/></svg>
<svg style="position:absolute;left:61px;top:381px;overflow:visible" width="13" height="14" viewBox="0 0 13 14"><path d="M6.5 0.7L12.3 3.9V10.1L6.5 13.3L0.7 10.1V3.9Z M0.7 3.9L6.5 7.1L12.3 3.9 M6.5 7.1V13.3" fill="none" stroke="#b4b4b4" stroke-width="1.1" stroke-linejoin="round"/></svg>
<svg style="position:absolute;left:49px;top:175px;overflow:visible" width="8" height="9" viewBox="0 0 8 9"><path d="M0 0V9L8 4.5Z" fill="#565656"/></svg>
<svg style="position:absolute;left:49px;top:223px;overflow:visible" width="8" height="9" viewBox="0 0 8 9"><path d="M0 0V9L8 4.5Z" fill="#565656"/></svg>
<svg style="position:absolute;left:49px;top:351px;overflow:visible" width="8" height="9" viewBox="0 0 8 9"><path d="M0 0V9L8 4.5Z" fill="#565656"/></svg>
<svg style="position:absolute;left:49px;top:367px;overflow:visible" width="8" height="9" viewBox="0 0 8 9"><path d="M0 0V9L8 4.5Z" fill="#565656"/></svg>
<svg style="position:absolute;left:49px;top:383px;overflow:visible" width="8" height="9" viewBox="0 0 8 9"><path d="M0 0V9L8 4.5Z" fill="#565656"/></svg>
<svg style="position:absolute;left:34px;top:399px;overflow:visible" width="8" height="9" viewBox="0 0 8 9"><path d="M0 0V9L8 4.5Z" fill="#565656"/></svg>
<svg style="position:absolute;left:48px;top:397px;overflow:visible" width="12.5" height="13.5" viewBox="1 0 22 23.5"><path d="M12.9288 4.2939l3.7997 2.1929c.1366.077.1415.2905 0 .3675l-4.515 2.6076a.4192.4192 0 0 1-.4246 0L7.274 6.8543c-.139-.0745-.1415-.293 0-.3675l3.7972-2.193V0L1.3758 5.5977V16.793l3.7177-2.1456v-4.3858c-.0025-.1565.1813-.2682.3128-.1813l4.5151 2.6076a.4177.4177 0 0 1 .2135.3666v5.2134c.0025.1565-.1813.2682-.3128.1813l-3.7972-2.1929-3.7177 2.1457L12 23.4124l9.6942-5.5977-3.7177-2.1457-3.7972 2.1929c-.1316.0869-.3128-.0248-.3128-.1813v-5.2134a.4177.4177 0 0 1 .2135-.3666l4.5151-2.6076c.1315-.0869.3153.0248.3128.1813v4.3858l3.7177 2.1456V5.5977L12.9288 0v4.2939z" fill="#e0e0e0"/></svg>
<div style="left:271px;top:127px;width:2px;height:2px;background:#c4c4c4;"></div>
<div style="left:271px;top:131px;width:2px;height:2px;background:#c4c4c4;"></div>
<div style="left:271px;top:135px;width:2px;height:2px;background:#c4c4c4;"></div>
<div style="left:271px;top:399px;width:2px;height:2px;background:#c4c4c4;"></div>
<div style="left:271px;top:403px;width:2px;height:2px;background:#c4c4c4;"></div>
<div style="left:271px;top:407px;width:2px;height:2px;background:#c4c4c4;"></div>
<div style="left:376px;top:103px;width:1px;height:20px;background:#1c1c1c;"></div>
<div style="left:462px;top:103px;width:1px;height:20px;background:#1c1c1c;"></div>
<div style="left:622px;top:103px;width:1px;height:20px;background:#1c1c1c;"></div>
<div style="left:1148px;top:103px;width:1px;height:20px;background:#1c1c1c;"></div>
<div style="left:1174px;top:103px;width:1px;height:20px;background:#1c1c1c;"></div>
<div style="left:1350px;top:103px;width:1px;height:20px;background:#1c1c1c;"></div>
<div style="left:1376px;top:103px;width:1px;height:20px;background:#1c1c1c;"></div>
<div style="left:1402px;top:103px;width:1px;height:20px;background:#1c1c1c;"></div>
<div style="left:1442px;top:103px;width:1px;height:20px;background:#1c1c1c;"></div>
<div style="left:1494px;top:103px;width:1px;height:20px;background:#1c1c1c;"></div>
<svg style="position:absolute;left:364px;top:111px;overflow:visible" width="8" height="4.5" viewBox="0 0 8 4.5"><path d="M0 0H8L4.0 4.5Z" fill="#b8b8b8"/></svg>
<svg style="position:absolute;left:449px;top:111px;overflow:visible" width="8" height="4.5" viewBox="0 0 8 4.5"><path d="M0 0H8L4.0 4.5Z" fill="#b8b8b8"/></svg>
<svg style="position:absolute;left:609px;top:111px;overflow:visible" width="8" height="4.5" viewBox="0 0 8 4.5"><path d="M0 0H8L4.0 4.5Z" fill="#b8b8b8"/></svg>
<svg style="position:absolute;left:1135px;top:111px;overflow:visible" width="8" height="4.5" viewBox="0 0 8 4.5"><path d="M0 0H8L4.0 4.5Z" fill="#5a5a5a"/></svg>
<svg style="position:absolute;left:1499px;top:111px;overflow:visible" width="8" height="4.5" viewBox="0 0 8 4.5"><path d="M0 0H8L4.0 4.5Z" fill="#b8b8b8"/></svg>
<div style="left:676px;top:113px;width:140px;height:2px;background:#555555;"></div>
<div style="left:666px;top:109px;width:10px;height:10px;background:#8a8a8a;border-radius:50%;"></div>
<svg style="position:absolute;left:1154px;top:105px;overflow:visible" width="14" height="15" viewBox="0 0 14 15"><g fill="#a8a8a8"><ellipse cx="7" cy="9" rx="4.6" ry="5.6"/><path d="M3 1.5L4.5 3.5M11 1.5L9.5 3.5M1 4L3 6.5M13 4L11 6.5M0.8 9.5L2.6 8.8M13.2 9.5L11.4 8.8M1.2 14L2.8 12M12.8 14L11.2 12" stroke="#a8a8a8" stroke-width="1.3" fill="none"/></g></svg>
<svg style="position:absolute;left:1357px;top:108px;overflow:visible" width="13" height="10" viewBox="0 0 13 10"><rect x="0" y="3" width="2.5" height="4" fill="#c0c0c0"/><path d="M3 3L7 0V10L3 7Z" fill="#c0c0c0"/><path d="M8.6 3.2Q9.8 5 8.6 6.8M10.4 1.8Q12.6 5 10.4 8.2" fill="none" stroke="#c0c0c0" stroke-width="1.1"/></svg>
<svg style="position:absolute;left:1382px;top:108px;overflow:visible" width="14" height="10" viewBox="0 0 14 10"><rect x="0.55" y="0.55" width="12.9" height="8.9" fill="none" stroke="#c0c0c0" stroke-width="1.1"/><g fill="#c0c0c0"><rect x="2.3" y="2.2" width="1.6" height="1.4"/><rect x="5.1" y="2.2" width="1.6" height="1.4"/><rect x="7.9" y="2.2" width="1.6" height="1.4"/><rect x="10.4" y="2.2" width="1.4" height="1.4"/><rect x="2.3" y="4.4" width="1.6" height="1.4"/><rect x="5.1" y="4.4" width="1.6" height="1.4"/><rect x="7.9" y="4.4" width="1.6" height="1.4"/><rect x="10.4" y="4.4" width="1.4" height="1.4"/><rect x="2.3" y="6.6" width="1.6" height="1.4"/><rect x="4.6" y="6.6" width="5" height="1.4"/><rect x="10.4" y="6.6" width="1.4" height="1.4"/></g></svg>
<svg style="position:absolute;left:9px;top:734px;overflow:visible" width="12" height="10" viewBox="0 0 12 10"><path d="M0 0.5H4.5L5.8 1.8H12V10H0Z" fill="#b8b8b8"/></svg>
<svg style="position:absolute;left:105px;top:733px;overflow:visible" width="10" height="11" viewBox="0 0 10 11"><rect x="0" y="0" width="10" height="11" rx="1" fill="#b8b8b8"/><g fill="#111"><rect x="1.8" y="2" width="6.4" height="1.1"/><rect x="1.8" y="4.2" width="6.4" height="1.1"/><rect x="1.8" y="6.4" width="4.5" height="1.1"/><rect x="1.8" y="8.4" width="6.4" height="1.1"/></g></svg>
<svg style="position:absolute;left:205px;top:733px;overflow:visible" width="11" height="11" viewBox="0 0 11 11"><g stroke="#b8b8b8" stroke-width="1.2"><path d="M1.5 0V11M5.5 0V11M9.5 0V11"/></g><g fill="#b8b8b8"><rect x="0" y="6" width="3" height="2"/><rect x="4" y="2" width="3" height="2"/><rect x="8" y="5" width="3" height="2"/></g></svg>
<svg style="position:absolute;left:1477px;top:732px;overflow:visible" width="9" height="11" viewBox="0 0 9 11"><path d="M1.4 2.6Q3.2 0.6 5.6 1.1Q7.4 1.6 7.4 3.6V5.8" fill="none" stroke="#c4c4c4" stroke-width="1.1"/><rect x="0.6" y="6" width="7.6" height="4.4" fill="none" stroke="#c4c4c4" stroke-width="1.1"/></svg>
<div style="left:1497px;top:733px;width:2px;height:2px;background:#c4c4c4;"></div>
<div style="left:1497px;top:737px;width:2px;height:2px;background:#c4c4c4;"></div>
<div style="left:1497px;top:741px;width:2px;height:2px;background:#c4c4c4;"></div>
<div style="left:7px;top:759px;width:12px;height:2px;background:#c4c4c4;"></div>
<div style="left:12px;top:754px;width:2px;height:12px;background:#c4c4c4;"></div>
<svg style="position:absolute;left:23px;top:758px;overflow:visible" width="8" height="4.5" viewBox="0 0 8 4.5"><path d="M0 0H8L4.0 4.5Z" fill="#b8b8b8"/></svg>
<div style="left:1044px;top:752px;width:300px;height:16px;background:#1f1f1f;border-radius:3px 0 0 3px;border-top:1px solid #161616;"></div>
<svg style="position:absolute;left:1049px;top:757px;overflow:visible" width="7" height="7" viewBox="0 0 7 7"><circle cx="3.1100000000000003" cy="3.1100000000000003" r="2.31" fill="none" stroke="#b0b0b0" stroke-width="1.0"/><path d="M4.8425 4.8425L6.2 6.2" stroke="#b0b0b0" stroke-width="1.2" stroke-linecap="round"/></svg>
<div style="left:1344px;top:752px;width:20px;height:16px;background:#262626;"></div>
<svg style="position:absolute;left:1347px;top:754px;overflow:visible" width="12" height="12" viewBox="0 0 12 12"><rect x="3.6" y="0.6" width="7.8" height="7.8" rx="1" fill="none" stroke="#c4c4c4" stroke-width="1.1"/><rect x="0.6" y="7.4" width="4" height="4" fill="#262626" stroke="#c4c4c4" stroke-width="1.1"/><path d="M5.5 6.5L9 3M6.3 3H9V5.7" fill="none" stroke="#c4c4c4" stroke-width="1.1"/></svg>
<div style="left:1365px;top:750px;width:1px;height:20px;background:#1e1e1e;"></div>
<div style="left:1391px;top:750px;width:1px;height:20px;background:#1e1e1e;"></div>
<div style="left:1417px;top:750px;width:1px;height:20px;background:#1e1e1e;"></div>
<div style="left:1443px;top:750px;width:1px;height:20px;background:#1e1e1e;"></div>
<div style="left:1469px;top:750px;width:1px;height:20px;background:#1e1e1e;"></div>
<svg style="position:absolute;left:1372px;top:753px;overflow:visible" width="12" height="13" viewBox="0 0 12 13"><g fill="#b4b4b4"><rect x="1.2" y="0" width="5" height="5"/><circle cx="3.6" cy="9.3" r="3.5"/><path d="M8.8 4.5L12 10.8H5.6Z"/></g></svg>
<svg style="position:absolute;left:1398px;top:754px;overflow:visible" width="11" height="11" viewBox="0 0 11 11"><path d="M6 0.3H10.7V5L5 10.7L0.3 6Z" fill="#b4b4b4"/><circle cx="8.3" cy="2.7" r="1" fill="#2d2d2d"/></svg>
<svg style="position:absolute;left:1422px;top:753px;overflow:visible" width="14" height="14" viewBox="0 0 14 14"><path d="M4.1 0.3H9.9L13.7 4.1V9.9L9.9 13.7H4.1L0.3 9.9V4.1Z" fill="#c0c0c0"/><rect x="6.2" y="2.8" width="1.6" height="6" fill="#2d2d2d"/><rect x="6.2" y="10" width="1.6" height="1.6" fill="#2d2d2d"/></svg>
<svg style="position:absolute;left:1450px;top:754px;overflow:visible" width="12" height="12" viewBox="0 0 24 24"><path d="M12 1L15 8.6L23 9.2L16.9 14.3L18.9 22.3L12 17.9L5.1 22.3L7.1 14.3L1 9.2L9 8.6Z" fill="#6e6e6e"/></svg>
<svg style="position:absolute;left:1476px;top:756px;overflow:visible" width="15" height="9" viewBox="0 0 15 9"><path d="M0.6 4.5C2.5 1.8 4.8 0.6 7.5 0.6S12.5 1.8 14.4 4.5C12.5 7.2 10.2 8.4 7.5 8.4S2.5 7.2 0.6 4.5Z" fill="none" stroke="#7a7a7a" stroke-width="1.1"/><path d="M4.6 2.4A3 3 0 0 0 10.4 2.4C9.5 1.6 8.5 1.3 7.5 1.3S5.5 1.6 4.6 2.4Z" fill="#7a7a7a"/></svg>
<div class="t" style="left:1493px;top:755.34px;font-size:12px;line-height:12px;color:#a8a8a8;font-weight:400;font-family:'Liberation Sans', sans-serif;">30</div>
<svg style="position:absolute;left:4px;top:777px;overflow:visible" width="9" height="8" viewBox="0 0 9 8"><path d="M0 0H9L4.5 8Z" fill="#565656"/></svg>
<svg style="position:absolute;left:18px;top:771px;overflow:visible" width="13" height="13" viewBox="0 0 24 24"><path d="M12 1L15 8.6L23 9.2L16.9 14.3L18.9 22.3L12 17.9L5.1 22.3L7.1 14.3L1 9.2L9 8.6Z" fill="#c0c0c0"/></svg>
<svg style="position:absolute;left:32px;top:789px;overflow:visible" width="12" height="12" viewBox="0 0 12 12"><circle cx="4.76" cy="4.76" r="3.96" fill="none" stroke="#b4b4b4" stroke-width="1.2"/><path d="M7.7299999999999995 7.7299999999999995L11.2 11.2" stroke="#b4b4b4" stroke-width="1.44" stroke-linecap="round"/></svg>
<svg style="position:absolute;left:32px;top:805px;overflow:visible" width="12" height="12" viewBox="0 0 12 12"><circle cx="4.76" cy="4.76" r="3.96" fill="none" stroke="#b4b4b4" stroke-width="1.2"/><path d="M7.7299999999999995 7.7299999999999995L11.2 11.2" stroke="#b4b4b4" stroke-width="1.44" stroke-linecap="round"/></svg>
<svg style="position:absolute;left:32px;top:821px;overflow:visible" width="12" height="12" viewBox="0 0 12 12"><circle cx="4.76" cy="4.76" r="3.96" fill="none" stroke="#b4b4b4" stroke-width="1.2"/><path d="M7.7299999999999995 7.7299999999999995L11.2 11.2" stroke="#b4b4b4" stroke-width="1.44" stroke-linecap="round"/></svg>
<svg style="position:absolute;left:32px;top:837px;overflow:visible" width="12" height="12" viewBox="0 0 12 12"><circle cx="4.76" cy="4.76" r="3.96" fill="none" stroke="#b4b4b4" stroke-width="1.2"/><path d="M7.7299999999999995 7.7299999999999995L11.2 11.2" stroke="#b4b4b4" stroke-width="1.44" stroke-linecap="round"/></svg>
<svg style="position:absolute;left:32px;top:853px;overflow:visible" width="12" height="12" viewBox="0 0 12 12"><circle cx="4.76" cy="4.76" r="3.96" fill="none" stroke="#b4b4b4" stroke-width="1.2"/><path d="M7.7299999999999995 7.7299999999999995L11.2 11.2" stroke="#b4b4b4" stroke-width="1.44" stroke-linecap="round"/></svg>
<svg style="position:absolute;left:32px;top:869px;overflow:visible" width="12" height="12" viewBox="0 0 12 12"><circle cx="4.76" cy="4.76" r="3.96" fill="none" stroke="#b4b4b4" stroke-width="1.2"/><path d="M7.7299999999999995 7.7299999999999995L11.2 11.2" stroke="#b4b4b4" stroke-width="1.44" stroke-linecap="round"/></svg>
<svg style="position:absolute;left:4px;top:904px;overflow:visible" width="9" height="8" viewBox="0 0 9 8"><path d="M0 0H9L4.5 8Z" fill="#565656"/></svg>
<svg style="position:absolute;left:18px;top:901px;overflow:visible" width="14" height="10" viewBox="0 0 14 10"><path d="M0 0.5H4.5L5.8 1.8H11.5V3.5H3L0 10Z M3.4 4.3H14L11 10H0.4Z" fill="#c2c2c2"/></svg>
<svg style="position:absolute;left:32px;top:917px;overflow:visible" width="12" height="10" viewBox="0 0 12 10"><path d="M0 0.5H4.5L5.8 1.8H12V10H0Z" fill="#c2c2c2"/></svg>
<svg style="position:absolute;left:32px;top:933px;overflow:visible" width="12" height="10" viewBox="0 0 12 10"><path d="M0 0.5H4.5L5.8 1.8H12V10H0Z" fill="#c2c2c2"/></svg>
<svg style="position:absolute;left:32px;top:949px;overflow:visible" width="12" height="10" viewBox="0 0 12 10"><path d="M0 0.5H4.5L5.8 1.8H12V10H0Z" fill="#c2c2c2"/></svg>
<svg style="position:absolute;left:32px;top:965px;overflow:visible" width="12" height="10" viewBox="0 0 12 10"><path d="M0 0.5H4.5L5.8 1.8H12V10H0Z" fill="#c2c2c2"/></svg>
<svg style="position:absolute;left:32px;top:981px;overflow:visible" width="12" height="10" viewBox="0 0 12 10"><path d="M0 0.5H4.5L5.8 1.8H12V10H0Z" fill="#c2c2c2"/></svg>
<svg style="position:absolute;left:32px;top:997px;overflow:visible" width="12" height="10" viewBox="0 0 12 10"><path d="M0 0.5H4.5L5.8 1.8H12V10H0Z" fill="#c2c2c2"/></svg>
<svg style="position:absolute;left:19px;top:965px;overflow:visible" width="8" height="9" viewBox="0 0 8 9"><path d="M0 0V9L8 4.5Z" fill="#565656"/></svg>
<svg style="position:absolute;left:19px;top:997px;overflow:visible" width="8" height="9" viewBox="0 0 8 9"><path d="M0 0V9L8 4.5Z" fill="#565656"/></svg>
<svg style="position:absolute;left:4px;top:1013px;overflow:visible" width="8" height="9" viewBox="0 0 8 9"><path d="M0 0V9L8 4.5Z" fill="#565656"/></svg>
<svg style="position:absolute;left:18px;top:1013px;overflow:visible" width="12" height="10" viewBox="0 0 12 10"><path d="M0 0.5H4.5L5.8 1.8H12V10H0Z" fill="#c2c2c2"/></svg>
<svg style="position:absolute;left:257px;top:777px;overflow:visible" width="5" height="9" viewBox="0 0 5 9"><path d="M0.5 0.5L4.5 4.5L0.5 8.5" fill="none" stroke="#8a8a8a" stroke-width="1.1"/></svg>
<div style="left:1441px;top:1048px;width:55px;height:2px;background:#4e4e4e;"></div>
<div style="left:1468px;top:1043px;width:10px;height:10px;background:#8e8e8e;border-radius:50%;"></div>
<div style="left:225px;top:804px;width:60px;height:60px;background:#3d3d3d;"></div>
<div style="left:234px;top:813px;width:42px;height:42px;background:#b6b40c;border-radius:50%;"></div>
<div class="t" style="left:195px;width:120px;top:868.21px;font-size:10.5px;line-height:11px;color:#b8b8b8;text-align:center;"><svg width="11" height="12" viewBox="0 0 52 56" style="vertical-align:-2px;margin-right:3px"><path d="M26 1L51 14.5V41.5L26 55L1 41.5V14.5Z" fill="#6bb5dd"/><path d="M1 14.5L26 28L51 14.5 M26 28V55" fill="none" stroke="#15212d" stroke-width="6"/></svg>Ammo</div>
<svg style="position:absolute;left:303px;top:806px;overflow:visible" width="52" height="56" viewBox="0 0 52 56"><path d="M26 -0.8L53 13.2V44L26 57L-1 44V13.2Z" fill="#15212c" stroke="#15212c" stroke-width="0.6" stroke-linejoin="round"/><g fill="#6ab3db" stroke="#6ab3db" stroke-width="0.8" stroke-linejoin="round"><path d="M26 1L49.5 11.3L26 23.3L2.5 11.3Z"/><path d="M0.6 14.6L23.8 26.6V55.2L0.6 43Z"/><path d="M51.4 14.6L28.2 26.6V55.2L51.4 43Z"/></g></svg>
<div class="t" style="left:271px;width:120px;top:869.21px;font-size:10.5px;line-height:11px;color:#b8b8b8;text-align:center;">AxisMaxCa...</div>
<svg style="position:absolute;left:379px;top:806px;overflow:visible" width="52" height="56" viewBox="0 0 52 56"><path d="M26 -0.8L53 13.2V44L26 57L-1 44V13.2Z" fill="#15212c" stroke="#15212c" stroke-width="0.6" stroke-linejoin="round"/><g fill="#6ab3db" stroke="#6ab3db" stroke-width="0.8" stroke-linejoin="round"><path d="M26 1L49.5 11.3L26 23.3L2.5 11.3Z"/><path d="M0.6 14.6L23.8 26.6V55.2L0.6 43Z"/><path d="M51.4 14.6L28.2 26.6V55.2L51.4 43Z"/></g></svg>
<div class="t" style="left:347px;width:120px;top:869.21px;font-size:10.5px;line-height:11px;color:#b8b8b8;text-align:center;">AxisMinCa...</div>
<div style="left:453px;top:804px;width:60px;height:60px;background:#3d3d3d;"></div>
<div style="left:462px;top:813px;width:42px;height:42px;background:#d9d9d9;border-radius:50%;"></div>
<div class="t" style="left:423px;width:120px;top:868.21px;font-size:10.5px;line-height:11px;color:#b8b8b8;text-align:center;"><svg width="11" height="12" viewBox="0 0 52 56" style="vertical-align:-2px;margin-right:3px"><path d="M26 1L51 14.5V41.5L26 55L1 41.5V14.5Z" fill="#6bb5dd"/><path d="M1 14.5L26 28L51 14.5 M26 28V55" fill="none" stroke="#15212d" stroke-width="6"/></svg>Change...</div>
<svg style="position:absolute;left:531px;top:806px;overflow:visible" width="52" height="56" viewBox="0 0 52 56"><path d="M26 -0.8L53 13.2V44L26 57L-1 44V13.2Z" fill="#15212c" stroke="#15212c" stroke-width="0.6" stroke-linejoin="round"/><g fill="#6ab3db" stroke="#6ab3db" stroke-width="0.8" stroke-linejoin="round"><path d="M26 1L49.5 11.3L26 23.3L2.5 11.3Z"/><path d="M0.6 14.6L23.8 26.6V55.2L0.6 43Z"/><path d="M51.4 14.6L28.2 26.6V55.2L51.4 43Z"/></g></svg>
<div class="t" style="left:499px;width:120px;top:869.21px;font-size:10.5px;line-height:11px;color:#b8b8b8;text-align:center;">DataStorage</div>
<svg style="position:absolute;left:607px;top:806px;overflow:visible" width="52" height="56" viewBox="0 0 52 56"><path d="M26 -0.8L53 13.2V44L26 57L-1 44V13.2Z" fill="#15212c" stroke="#15212c" stroke-width="0.6" stroke-linejoin="round"/><g fill="#6ab3db" stroke="#6ab3db" stroke-width="0.8" stroke-linejoin="round"><path d="M26 1L49.5 11.3L26 23.3L2.5 11.3Z"/><path d="M0.6 14.6L23.8 26.6V55.2L0.6 43Z"/><path d="M51.4 14.6L28.2 26.6V55.2L51.4 43Z"/></g></svg>
<div class="t" style="left:575px;width:120px;top:869.21px;font-size:10.5px;line-height:11px;color:#b8b8b8;text-align:center;">EnemyLife...</div>
<svg style="position:absolute;left:683px;top:806px;overflow:visible" width="52" height="56" viewBox="0 0 52 56"><path d="M26 -0.8L53 13.2V44L26 57L-1 44V13.2Z" fill="#15212c" stroke="#15212c" stroke-width="0.6" stroke-linejoin="round"/><g fill="#6ab3db" stroke="#6ab3db" stroke-width="0.8" stroke-linejoin="round"><path d="M26 1L49.5 11.3L26 23.3L2.5 11.3Z"/><path d="M0.6 14.6L23.8 26.6V55.2L0.6 43Z"/><path d="M51.4 14.6L28.2 26.6V55.2L51.4 43Z"/></g></svg>
<div class="t" style="left:651px;width:120px;top:869.21px;font-size:10.5px;line-height:11px;color:#b8b8b8;text-align:center;">GameMana...</div>
<svg style="position:absolute;left:759px;top:806px;overflow:visible" width="52" height="56" viewBox="0 0 52 56"><path d="M26 -0.8L53 13.2V44L26 57L-1 44V13.2Z" fill="#15212c" stroke="#15212c" stroke-width="0.6" stroke-linejoin="round"/><g fill="#6ab3db" stroke="#6ab3db" stroke-width="0.8" stroke-linejoin="round"><path d="M26 1L49.5 11.3L26 23.3L2.5 11.3Z"/><path d="M0.6 14.6L23.8 26.6V55.2L0.6 43Z"/><path d="M51.4 14.6L28.2 26.6V55.2L51.4 43Z"/></g></svg>
<div class="t" style="left:727px;width:120px;top:869.21px;font-size:10.5px;line-height:11px;color:#b8b8b8;text-align:center;">GameUI</div>
<svg style="position:absolute;left:835px;top:806px;overflow:visible" width="52" height="56" viewBox="0 0 52 56"><path d="M26 -0.8L53 13.2V44L26 57L-1 44V13.2Z" fill="#15212c" stroke="#15212c" stroke-width="0.6" stroke-linejoin="round"/><g fill="#6ab3db" stroke="#6ab3db" stroke-width="0.8" stroke-linejoin="round"><path d="M26 1L49.5 11.3L26 23.3L2.5 11.3Z"/><path d="M0.6 14.6L23.8 26.6V55.2L0.6 43Z"/><path d="M51.4 14.6L28.2 26.6V55.2L51.4 43Z"/></g></svg>
<div class="t" style="left:803px;width:120px;top:869.21px;font-size:10.5px;line-height:11px;color:#b8b8b8;text-align:center;">Main Camera</div>
<div style="left:909px;top:804px;width:60px;height:60px;background:#3d3d3d;"></div>
<div style="left:918px;top:813px;width:41px;height:41px;background:#5e2222;"></div>
<div class="t" style="left:879px;width:120px;top:868.21px;font-size:10.5px;line-height:11px;color:#b8b8b8;text-align:center;"><svg width="11" height="12" viewBox="0 0 52 56" style="vertical-align:-2px;margin-right:3px"><path d="M26 1L51 14.5V41.5L26 55L1 41.5V14.5Z" fill="#6bb5dd"/><path d="M1 14.5L26 28L51 14.5 M26 28V55" fill="none" stroke="#15212d" stroke-width="6"/></svg>Player</div>
<div style="left:985px;top:804px;width:60px;height:60px;background:#3d3d3d;"></div>
<div style="left:994px;top:813px;width:41px;height:41px;background:#847a36;"></div>
<div class="t" style="left:955px;width:120px;top:868.21px;font-size:10.5px;line-height:11px;color:#b8b8b8;text-align:center;"><svg width="11" height="12" viewBox="0 0 52 56" style="vertical-align:-2px;margin-right:3px"><path d="M26 1L51 14.5V41.5L26 55L1 41.5V14.5Z" fill="#6bb5dd"/><path d="M1 14.5L26 28L51 14.5 M26 28V55" fill="none" stroke="#15212d" stroke-width="6"/></svg>Sand</div>
<svg style="position:absolute;left:1063px;top:806px;overflow:visible" width="52" height="56" viewBox="0 0 52 56"><path d="M26 -0.8L53 13.2V44L26 57L-1 44V13.2Z" fill="#15212c" stroke="#15212c" stroke-width="0.6" stroke-linejoin="round"/><g fill="#6ab3db" stroke="#6ab3db" stroke-width="0.8" stroke-linejoin="round"><path d="M26 1L49.5 11.3L26 23.3L2.5 11.3Z"/><path d="M0.6 14.6L23.8 26.6V55.2L0.6 43Z"/><path d="M51.4 14.6L28.2 26.6V55.2L51.4 43Z"/></g></svg>
<div class="t" style="left:1031px;width:120px;top:869.21px;font-size:10.5px;line-height:11px;color:#b8b8b8;text-align:center;">System</div>
<div style="left:1137px;top:804px;width:60px;height:60px;background:#3d3d3d;"></div>
<div style="left:1146px;top:813px;width:41px;height:41px;background:#d9d9d9;"></div>
<div class="t" style="left:1107px;width:120px;top:868.21px;font-size:10.5px;line-height:11px;color:#b8b8b8;text-align:center;"><svg width="11" height="12" viewBox="0 0 52 56" style="vertical-align:-2px;margin-right:3px"><path d="M26 1L51 14.5V41.5L26 55L1 41.5V14.5Z" fill="#6bb5dd"/><path d="M1 14.5L26 28L51 14.5 M26 28V55" fill="none" stroke="#15212d" stroke-width="6"/></svg>Turret</div>
<div style="left:1213px;top:804px;width:60px;height:60px;background:#3d3d3d;"></div>
<div style="left:1222px;top:813px;width:41px;height:41px;background:#011418;"></div>
<div class="t" style="left:1183px;width:120px;top:868.21px;font-size:10.5px;line-height:11px;color:#b8b8b8;text-align:center;"><svg width="11" height="12" viewBox="0 0 52 56" style="vertical-align:-2px;margin-right:3px"><path d="M26 1L51 14.5V41.5L26 55L1 41.5V14.5Z" fill="#6bb5dd"/><path d="M1 14.5L26 28L51 14.5 M26 28V55" fill="none" stroke="#15212d" stroke-width="6"/></svg>Wall</div>
<div style="left:1841px;top:1060px;width:1px;height:18px;background:#1c1c1c;"></div>
<div style="left:1867px;top:1060px;width:1px;height:18px;background:#1c1c1c;"></div>
<div style="left:1893px;top:1060px;width:1px;height:18px;background:#1c1c1c;"></div>
<svg style="position:absolute;left:1846px;top:1063px;overflow:visible" width="15" height="14" viewBox="0 0 14 15"><g fill="#b8b8b8"><ellipse cx="7" cy="9" rx="4.6" ry="5.6"/><path d="M3 1.5L4.5 3.5M11 1.5L9.5 3.5M1 4L3 6.5M13 4L11 6.5M0.8 9.5L2.6 8.8M13.2 9.5L11.4 8.8M1.2 14L2.8 12M12.8 14L11.2 12" stroke="#b8b8b8" stroke-width="1.3" fill="none"/></g><path d="M1 1L13.5 14.5" stroke="#111" stroke-width="1.6"/><path d="M1.5 0.5L14 14" stroke="#b8b8b8" stroke-width="0.8"/></svg>
<svg style="position:absolute;left:1873px;top:1063px;overflow:visible" width="14" height="14" viewBox="0 0 14 14"><g fill="#b8b8b8"><ellipse cx="7" cy="3" rx="6" ry="2.6"/><path d="M1 5.2C1 6.6 3.7 7.8 7 7.8S13 6.6 13 5.2V7C13 8.5 10.3 9.6 7 9.6S1 8.5 1 7Z"/><path d="M1 9.2C1 10.6 3.7 11.8 7 11.8S13 10.6 13 9.2V11C13 12.5 10.3 13.6 7 13.6S1 12.5 1 11Z"/></g><path d="M0.5 0.5L13.5 14" stroke="#111" stroke-width="1.6"/><path d="M1 0L14 13.5" stroke="#b8b8b8" stroke-width="0.8"/></svg>
<svg style="position:absolute;left:1899px;top:1063px;overflow:visible" width="14" height="14" viewBox="0 0 14 14"><circle cx="7" cy="7" r="6.4" fill="none" stroke="#b8b8b8" stroke-width="1.1"/><path d="M4 7.2L6.2 9.3L10.2 5" fill="none" stroke="#b8b8b8" stroke-width="1.5"/></svg>
<div style="left:1514px;top:1057px;width:405px;height:1px;background:#3a3a3a;"></div>
</div></body></html>
